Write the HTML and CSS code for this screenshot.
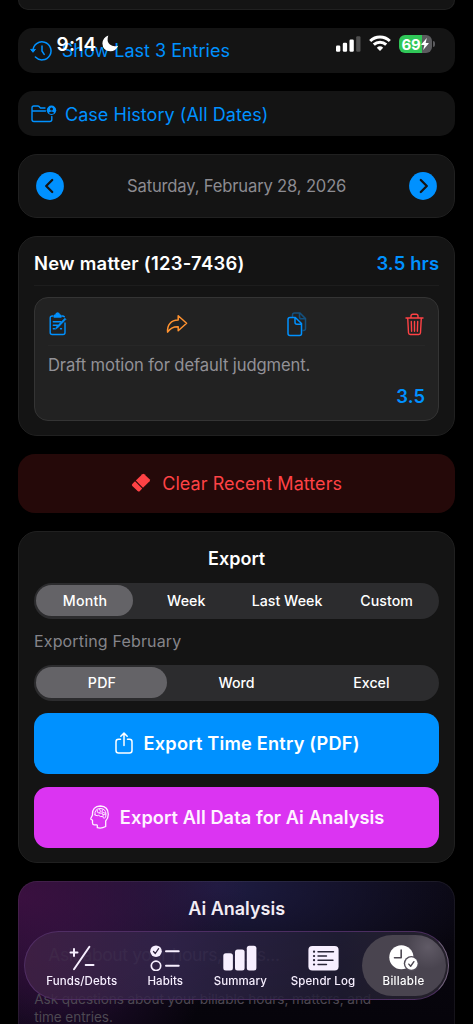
FILE: index.html
```html
<!DOCTYPE html>
<html lang="en">
<head>
<meta charset="utf-8">
<meta name="viewport" content="width=device-width, initial-scale=1">
<title>Billable</title>
<link rel="stylesheet" href="styles.css">
</head>
<body>
<div class="phone">
  <main class="feed">
    <section class="card stub"></section>
    <section class="card link-row">
      <svg class="ic-history" width="22" height="22" viewBox="0 0 22 22" fill="none" stroke="currentColor" stroke-width="1.5" stroke-linecap="round" stroke-linejoin="round"><path d="M3 10.8a9 9 0 1 1 2.4 6.2"/><path d="M.9 9.7 3 12.3l2.2-2.6z" fill="currentColor" stroke-width="1"/><path d="M12 6v5l2.2 3.4"/></svg>
      <span class="t-show">Show Last 3 Entries</span>
    </section>
    <section class="card link-row folder-row">
      <svg class="ic-folder" width="26" height="20" viewBox="0 0 26 20" fill="none" stroke="currentColor" stroke-width="1.4" stroke-linecap="round" stroke-linejoin="round"><path d="M14 4H9.5L8 2.4Q7.5 2 6.800 2H2.800Q1 2 1 3.800V15.500Q1 17.500 3 17.500H18.800Q20.800 17.500 20.800 15.500V12.500M1 7H14.500"/><circle cx="20.500" cy="6.300" r="4.700" fill="currentColor" stroke="none"/><circle cx="20.500" cy="4.900" r="1.500" fill="#141414" stroke="none"/><path d="M17.800 9.100Q18.500 7.400 20.500 7.400T23.200 9.100Q22 10.100 20.500 10.100T17.800 9.100Z" fill="#141414" stroke="none"/></svg>
      <span class="t-case">Case History (All Dates)</span>
    </section>
    <section class="card date-row">
      <svg width="28" height="28" viewBox="0 0 28 28"><circle cx="14" cy="14" r="13.900" fill="#0091ff"/><path d="M16.200 8 10.200 14l6 6" fill="none" stroke="#141414" stroke-width="2.300" stroke-linecap="round" stroke-linejoin="round"/></svg>
      <span class="t-date">Saturday, February 28, 2026</span>
      <svg width="28" height="28" viewBox="0 0 28 28"><circle cx="14" cy="14" r="13.900" fill="#0091ff"/><path d="M11.800 8 17.800 14l-6 6" fill="none" stroke="#141414" stroke-width="2.300" stroke-linecap="round" stroke-linejoin="round"/></svg>
    </section>
    <section class="card matter">
      <header class="matter-head"><span class="t-matter">New matter (123-7436)</span><span class="t-hrs">3.5 hrs</span></header>
      <div class="entry">
        <div class="actions">
          <svg class="blue" width="19" height="24" viewBox="0 0 19 24" fill="none" stroke="currentColor" stroke-width="1.400" stroke-linecap="round" stroke-linejoin="round"><path d="M4 4H3.200Q1.200 4 1.200 6V20.500Q1.200 22.500 3.200 22.500H14Q16 22.500 16 20.500V11M13 4h.5q1.200 0 1.800.7"/><path d="M5.200 5V4.200Q5.200 3.200 6.800 3 7 1 8.600 1T10.400 3Q12 3.200 12 4.200V5Z" fill="currentColor"/><path d="M4.300 9.800h7.500M4.300 13.300H8.500M4.300 16.800H5.500M11.500 16.800h1"/><path d="m6.500 17 1-2.200 8.400-8.600 1.100 1.100-8.400 8.600z" fill="currentColor" stroke-width=".6"/></svg>
          <svg class="orange" width="22" height="20" viewBox="0 0 22 20" fill="none" stroke="currentColor" stroke-width="1.500" stroke-linejoin="round"><path d="M12.200 1.800 20.600 9.300 12.200 16.800V12.700C7 12.500 4 14.300 1.600 18.200 1 10.700 5 6.300 12.200 6.100Z"/></svg>
          <svg class="blue" width="20" height="25" viewBox="0 0 20 25" fill="none" stroke="currentColor" stroke-width="1.500" stroke-linejoin="round"><path d="M5.500 5V3q0-2 2-2h5.500l5.500 5.600V16.500q0 2-2 2h-1M12.500 1v4q0 1.800 1.800 1.800h4" opacity=".42"/><path d="M3 5.500H8.300L14.500 11.500V21.500Q14.500 23.500 12.500 23.500H3Q1 23.500 1 21.500V7.500Q1 5.500 3 5.500ZM8 5.700v4.500q0 2 2 2h4.200"/></svg>
          <svg class="red" width="19" height="23" viewBox="0 0 19 23" fill="none" stroke="currentColor" stroke-width="1.400" stroke-linecap="round" stroke-linejoin="round"><path d="M1 5H18M6 5V3q0-1.800 1.800-1.800h3.400Q13 1.200 13 3v2M2.700 5l.8 14.800q.1 1.700 1.800 1.700h8.400q1.700 0 1.800-1.700L16.300 5M6.300 8.500l.3 9.800M9.500 8.500v9.800M12.700 8.500l-.3 9.800"/></svg>
        </div>
        <p class="t-draft">Draft motion for default judgment.</p>
        <div class="t-amount">3.5</div>
      </div>
    </section>
    <section class="clear">
      <svg width="20" height="20" viewBox="0 0 20 20" fill="currentColor"><path d="M11.300 1.200Q12.300.3 13.300 1.200L18.600 6.200Q19.500 7.200 18.600 8.200L12 14.700 4.800 7.500Z"/><path d="M4 8.300 11.200 15.500 8.900 18Q7.900 19 6.600 18L1.300 13Q.3 11.900 1.300 10.900Z"/></svg>
      <span class="t-clear">Clear Recent Matters</span>
    </section>
    <section class="card export">
      <h2 class="t-export">Export</h2>
      <div class="seg seg4"><span class="on"><b>Month</b></span><span>Week</span><span>Last Week</span><span>Custom</span></div>
      <p class="t-exporting">Exporting February</p>
      <div class="seg seg3"><span class="on"><b>PDF</b></span><span>Word</span><span>Excel</span></div>
      <div class="btn btn-blue">
        <svg width="18" height="22" viewBox="0 0 18 22" fill="none" stroke="currentColor" stroke-width="1.500" stroke-linecap="round" stroke-linejoin="round"><path d="M5.500 7.200H3.500Q1 7.200 1 9.700V18.500Q1 21 3.500 21H14.500Q17 21 17 18.500V9.700Q17 7.200 14.500 7.200H12.500M9 13.500V1.200M5.800 4.300 9 1.100 12.200 4.300"/></svg>
        <span class="t-btn1">Export Time Entry (PDF)</span>
      </div>
      <div class="btn btn-pink">
        <svg width="19" height="24" viewBox="0 0 19 24" fill="none" stroke="currentColor" stroke-width="1.300" stroke-linecap="round" stroke-linejoin="round"><path d="M7.300 22.700V20.400Q7.200 19.900 6.600 19.900H4.400Q2.600 19.900 2.500 18V15.300L1 14.300Q.5 13.900.9 13.200L2.500 10Q2 1.200 10.400 1 18.200 1.400 18.300 9.200 18.200 13.600 15.700 16V21.500Q11.500 23.800 7.300 22.700Z"/><path d="M5 9.900Q4.200 4 9.900 3.500 15.700 3.300 16 9.200 16.100 12.700 14.400 13.300 13 13.300 12.800 11.500H10.300L8.700 10.300Q7.500 11.600 5 9.900Z" stroke-width="1"/><path d="M7.300 5v2.200L9 8M9.500 4.200l1 2-1.200 2h3l1 2.800M12.500 4.800l-.6 2.200 3.300 1.200M13.300 9.500l2.200-.2" stroke-width=".9"/></svg>
        <span class="t-btn2">Export All Data for Ai Analysis</span>
      </div>
    </section>
    <section class="card ai">
      <h2 class="t-ai">Ai Analysis</h2>
      <div class="ai-field">Ask about your hours, rates...</div>
      <p class="t-ask">Ask questions about your billable hours, matters, and<br>time entries.</p>
    </section>
  </main>

  <div class="status">
    <span class="clock">9:14</span>
    <svg class="moon" width="17" height="17" viewBox="0 0 17 17" fill="#fff"><path d="M6.300.5Q4.200 6.400 7.900 9.500 11.200 12.400 16.200 10.700 13.700 16.300 8.400 16.300.8 15.900.4 8.400.8 2.600 6.300.5Z"/></svg>
    <svg class="signal" width="25" height="16" viewBox="0 0 25 16" fill="#fff"><rect x="0" y="9.500" width="4.300" height="6.300" rx="1.200"/><rect x="6.800" y="6.800" width="4.300" height="9" rx="1.200"/><rect x="13.500" y="3.500" width="4.300" height="12.300" rx="1.200"/><rect x="20.200" y="0.300" width="4.300" height="15.500" rx="1.200" opacity=".25"/></svg>
    <svg class="wifi" width="22" height="17" viewBox="0 0 22 17" fill="none" stroke="#fff" stroke-width="3"><path d="M1.200 6A14 14 0 0 1 20.800 6" /><path d="M4.800 9.700A9 9 0 0 1 17.200 9.700"/><path d="M7.800 12.700Q11 10 14.200 12.700L11 16Z" fill="#fff" stroke="none"/></svg>
    <div class="battery"><span>69</span><svg width="8" height="12" viewBox="0 0 8 12" fill="#fff"><path d="M5.800 0 .4 6.300Q0 7 .8 7H3.400L2.200 12 7.700 5.600Q8 4.900 7.300 4.900H4.700Z"/></svg></div>
  </div>

  <nav class="tabs">
    <a class="tab">
      <svg width="26" height="26" viewBox="0 0 26 26" fill="none" stroke="currentColor" stroke-width="2" stroke-linecap="round"><path d="M1.500 7.500H8.500M5 4v7M20.400 1.800 5 24.200M16.700 20H24.500"/></svg><span>Funds/Debts</span>
    </a>
    <a class="tab">
      <svg width="30" height="26" viewBox="0 0 30 26" fill="none" stroke="currentColor" stroke-width="2" stroke-linecap="round" stroke-linejoin="round"><circle cx="6" cy="6.200" r="5.800" fill="currentColor" stroke="none"/><path d="m3.500 6.500 1.800 2 3.300-4.800" stroke="#30243f" stroke-width="1.300"/><circle cx="6" cy="20.800" r="4.700" stroke-width="1.700"/><path d="M16 6.200H28.700M16 20.800H28.700"/></svg><span>Habits</span>
    </a>
    <a class="tab">
      <svg width="34" height="26" viewBox="0 0 34 26" fill="currentColor"><rect x=".3" y="8.300" width="9.600" height="17.200" rx="2.500"/><rect x="12" y="4.500" width="9.600" height="21" rx="2.500"/><rect x="23.800" y=".7" width="9.600" height="24.800" rx="2.500"/></svg><span>Summary</span>
    </a>
    <a class="tab">
      <svg width="31" height="26" viewBox="0 0 31 26"><rect x=".4" y=".9" width="30.200" height="24.500" rx="4" fill="currentColor"/><g stroke="#292537" stroke-width="1.400" stroke-linecap="round"><path d="M10 6.700H25.500M10 11H18.500M10 15.200H25M10 19.500H18.500"/><path d="M6 6.700h.1M6 11h.1M6 15.200h.1M6 19.500h.1" stroke-width="2.200"/></g></svg><span>Spendr Log</span>
    </a>
    <a class="tab active">
      <svg width="31" height="28" viewBox="0 0 31 28" fill="none" stroke-linecap="round" stroke-linejoin="round"><circle cx="13.200" cy="13.200" r="13" fill="currentColor"/><path d="M13 5.300v8.500H5.800" stroke="#4b4650" stroke-width="1.700"/><circle cx="24" cy="20" r="8.200" fill="#514c58"/><circle cx="24" cy="20" r="6.700" fill="currentColor"/><path d="m21.200 20.600 2 2.300 3.500-5" stroke="#4b4650" stroke-width="1.500"/></svg><span>Billable</span>
    </a>
  </nav>
</div>
</body>
</html>
```

FILE: styles.css
```css
* { box-sizing: border-box; }
html, body { margin: 0; background: #000; }
body { font-family: Inter, "Liberation Sans", sans-serif; color: #fff; }
h2, p { margin: 0; font-weight: inherit; }
svg { display: block; flex: none; }
span, h2, p { white-space: nowrap; }

.phone { position: relative; width: 473px; height: 1024px; overflow: hidden; background: #000; }
.feed { display: flex; flex-direction: column; gap: 18px; padding: 0 18px 0 18.300px; }
.card { flex: none; background: #141414; border: 1px solid #202020; border-radius: 19px; }
.stub { height: 10px; border-top: 0; border-radius: 0 0 17px 17px; }

.link-row { height: 45.200px; border: 0; border-radius: 15px; display: flex; align-items: center; padding-left: 11.500px; gap: 10px; color: #0091ff; font-size: 18px; }
.folder-row { padding: 1px 0 0 12.700px; gap: 8px; letter-spacing: .04px; }

.date-row { height: 63.600px; display: flex; align-items: center; justify-content: space-between; padding: 0 16.700px; }
.t-date { font-size: 16.600px; letter-spacing: -.17px; color: #8c8b91; }

.matter { height: 200px; padding: 0 14.700px; font-size: 18.400px; font-weight: 600; letter-spacing: .28px; }
.matter-head { height: 49px; display: flex; align-items: center; justify-content: space-between; padding-top: 4px; border-bottom: 1px solid #1d1d1d; }
.t-hrs, .t-amount { letter-spacing: .15px; }
.t-hrs, .t-amount, .blue { color: #0091ff; }
.orange { color: #ff9230; }
.red { color: #ff4245; }
.entry { margin-top: 11px; height: 124px; border: 1.300px solid #343434; border-radius: 14px; background: #222; padding: 0 13px; }
.actions { height: 48.500px; padding: 5px 1px 0 1px; display: flex; align-items: center; justify-content: space-between; border-bottom: 1px solid #272727; }
.t-draft { margin-top: 8px; line-height: 22px; font-size: 16.600px; letter-spacing: -.1px; font-weight: 400; color: #929197; }
.t-amount { margin-top: 9px; line-height: 22px; text-align: right; }

.clear { height: 58.600px; border-radius: 17px; background: #250909; color: #ff4245; display: flex; align-items: center; justify-content: center; gap: 11px; font-size: 18px; letter-spacing: .06px; }

.export { height: 332.500px; padding: 0 14.700px; }
.t-export { text-align: center; font-size: 18px; font-weight: 600; line-height: 22px; padding-top: 16px; }
.seg { height: 36.200px; border-radius: 18px; background: #2c2c2e; padding: 2.500px 0 2.500px 2.500px; display: grid; font-size: 14.200px; letter-spacing: .03px; font-weight: 450; }
.seg4 { grid-template-columns: 97px 105.500px 96px 1fr; margin-top: 13px; }
.seg4 > :last-child { padding-right: 1px; }
.seg3 { grid-template-columns: 131px 138px 1fr; }
.seg3 > :last-child { padding-right: 2px; }
.seg > span { display: flex; align-items: center; justify-content: center; }
.seg > .on { background: #646367; border-radius: 16px; }
.seg b { font-weight: 550; letter-spacing: .2px; }
.t-exporting { font-size: 16px; letter-spacing: .16px; line-height: 45px; margin-bottom: 1px; color: #85848a; }
.btn { height: 60.500px; border-radius: 14px; display: flex; align-items: center; justify-content: center; font-size: 18.200px; font-weight: 600; padding: 0 0 1px 1px; }
.btn-blue { margin-top: 12.500px; background: #0091ff; gap: 11px; letter-spacing: .2px; }
.btn-pink { margin-top: 13.500px; background: #db34f2; gap: 11px; letter-spacing: .08px; color: #fff3ff; }

.ai { height: 190px; padding: 0 15px; border-color: #ffffff10; background: radial-gradient(ellipse 230px 130px at 0 15px, #3e1042e6, transparent), radial-gradient(ellipse 270px 120px at 200px 5px, #1e1c42, transparent), radial-gradient(circle 150px at 40px 75px, #260f36, transparent), linear-gradient(#090710, #050309); background-origin: border-box; }
.t-ai { text-align: center; color: #f3edf5; font-size: 18px; font-weight: 600; line-height: 22px; padding-top: 16px; }
.ai-field { margin: 24px 0 0 14px; height: 22px; font-size: 17.500px; line-height: 22px; letter-spacing: -.4px; color: #4c4459; }
.t-ask { margin-top: 24px; font-size: 13.600px; letter-spacing: -.07px; line-height: 18px; color: #4d4852; }

.status { position: absolute; top: 34px; left: 56.500px; width: 376px; height: 20px; display: flex; align-items: center; }
.clock { font-size: 19px; font-weight: 600; width: 45px; letter-spacing: .25px; }
.moon { margin-top: -1px; }
.signal { margin-left: 217.500px; }
.wifi { margin-left: 8px; margin-top: -1px; }
.battery { position: relative; margin-left: 8px; width: 32.500px; height: 18px; border-radius: 6px; background: linear-gradient(90deg, #30c758 70%, #5b5b5e 70%); display: flex; align-items: center; padding-left: 2.500px; font-size: 15px; font-weight: 700; letter-spacing: -.2px; }
.battery::after { content: ""; position: absolute; left: 33.500px; top: 6px; width: 2px; height: 6px; border-radius: 0 2px 2px 0; background: #5b5b5e; }

.tabs { position: absolute; left: 24px; top: 930.500px; width: 425px; height: 69.500px; border-radius: 35px; border: 1.300px solid #56336dd0; border-right-color: #74647e; background: linear-gradient(90deg, #402245d8, #31254ad8 35%, #211e34d8 75%, #2b2731d8); backdrop-filter: blur(.6px); display: grid; grid-template-columns: 113.500px 53.500px 96.500px 73px 84px; padding-top: 3px; }
.tab { height: 61px; display: flex; flex-direction: column; align-items: center; padding-top: 10px; color: #f7efff; font-size: 11.500px; font-weight: 550; letter-spacing: .1px; }
.tab svg { height: 26px; }
.tab span { line-height: 14px; margin-top: 3.500px; }
.tab:nth-child(4) { padding-right: 4px; }
.active { border-radius: 31px; background: radial-gradient(circle 22px at 66px 12px, #6b6571aa, transparent), #49444f; color: #fff; letter-spacing: .3px; }
.active svg { overflow: visible; }
```
